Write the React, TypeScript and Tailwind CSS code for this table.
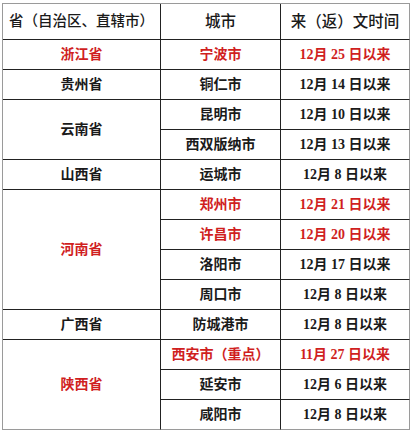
import React from "react";

type Row = {
  province?: string;
  span?: number;
  provinceRed?: boolean;
  city: string;
  date: string;
  red?: boolean;
};

const rows: Row[] = [
  { province: "浙江省", span: 1, provinceRed: true, city: "宁波市", date: "12月 25 日以来", red: true },
  { province: "贵州省", span: 1, city: "铜仁市", date: "12月 14 日以来" },
  { province: "云南省", span: 2, city: "昆明市", date: "12月 10 日以来" },
  { city: "西双版纳市", date: "12月 13 日以来" },
  { province: "山西省", span: 1, city: "运城市", date: "12月 8 日以来" },
  { province: "河南省", span: 4, provinceRed: true, city: "郑州市", date: "12月 21 日以来", red: true },
  { city: "许昌市", date: "12月 20 日以来", red: true },
  { city: "洛阳市", date: "12月 17 日以来" },
  { city: "周口市", date: "12月 8 日以来" },
  { province: "广西省", span: 1, city: "防城港市", date: "12月 8 日以来" },
  { province: "陕西省", span: 3, provinceRed: true, city: "西安市（重点）", date: "11月 27 日以来", red: true },
  { city: "延安市", date: "12月 6 日以来" },
  { city: "咸阳市", date: "12月 8 日以来" },
];

export default function App() {
  const last = rows.length - 1;

  return (
    <div className="w-[412px] h-[433px] bg-white pt-[3px] pl-[2px]">
      <table
        className="table-fixed border-separate border-spacing-0 border-t border-l border-[#9a9a9a] w-[408px] text-center text-[#1a1a1a]"
        style={{ fontFamily: '"Liberation Serif", "Noto Sans CJK SC", serif' }}
      >
        <colgroup>
          <col className="w-[158px]" />
          <col className="w-[120px]" />
          <col className="w-[129px]" />
        </colgroup>
        <thead>
          <tr className="h-[36px] text-[15.5px]">
            <th className="font-medium text-[14.5px] whitespace-nowrap border-r border-b border-[#222]">
              省（自治区、直辖市）
            </th>
            <th className="font-medium border-r border-b border-[#222]">城市</th>
            <th className="font-medium border-r border-b border-[#222] border-r-[#9a9a9a]">来（返）文时间</th>
          </tr>
        </thead>
        <tbody className="text-[14px] font-bold">
          {rows.map((r, i) => {
            const isLast = i === last;
            return (
              <tr key={i} className="h-[30px]">
                {r.province && (
                  <td
                    rowSpan={r.span}
                    className={`border-r border-b border-[#222] align-middle ${
                      i + (r.span ?? 1) - 1 === last ? "border-b-[#9a9a9a]" : ""
                    } ${r.provinceRed ? "text-[#d01f1f]" : ""}`}
                  >
                    {r.province}
                  </td>
                )}
                <td
                  className={`border-r border-b border-[#222] whitespace-nowrap ${
                    isLast ? "border-b-[#9a9a9a]" : ""
                  } ${r.red ? "text-[#d01f1f]" : ""}`}
                >
                  {r.city}
                </td>
                <td
                  className={`border-r border-b border-[#222] border-r-[#9a9a9a] whitespace-nowrap ${
                    isLast ? "border-b-[#9a9a9a]" : ""
                  } ${r.red ? "text-[#d01f1f]" : ""}`}
                >
                  {r.date}
                </td>
              </tr>
            );
          })}
        </tbody>
      </table>
    </div>
  );
}
